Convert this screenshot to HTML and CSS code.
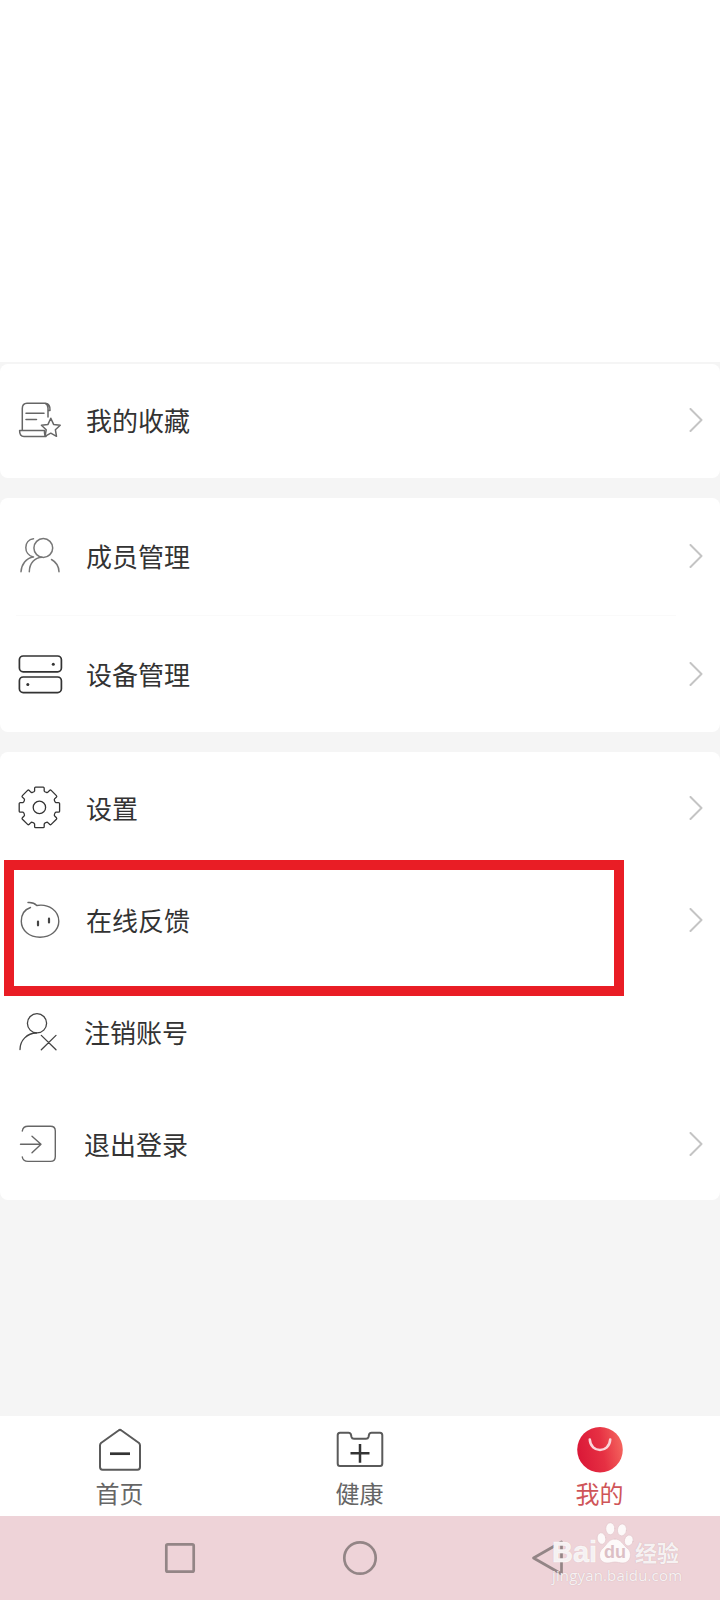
FILE: index.html
```html
<!DOCTYPE html>
<html lang="zh-CN">
<head>
<meta charset="utf-8">
<title>我的</title>
<link rel="stylesheet" href="styles.css">
</head>
<body>
<div class="screen">
  <header class="profile"></header>
  <main class="content">
    <section class="card card-favorites">
      <div class="row">
        <svg class="icon" viewBox="0 0 72 60" stroke="#666" stroke-width="1.500"><path d="M22.300 40V18.500Q22.300 13.200 27 13.200H45.500Q50.500 14 50 20.500H48M45 13.200Q48 15 48 18V27M44.500 40.500H19.600Q19.500 46.500 24 46.500H46M44.500 40.500V43Q44.500 45 46 46.500M26 23.300H44M26 29.500H36.500"/><path fill="#fff" d="M50.800 28.300L53.600 34.400L60.200 35.300L55.400 39.800L56.500 46.300L50.800 43.200L45 46.300L46.200 39.800L41.400 35.300L48 34.400Z"/></svg>
        <span class="label">我的收藏</span>
        <svg class="chevron" viewBox="0 0 14 24"><path d="M1.500 1L12.500 12L1.500 23"/></svg>
      </div>
    </section>
    <section class="card card-manage">
      <div class="row row-first">
        <svg class="icon" viewBox="0 0 72 60" stroke="#777" stroke-width="1.500"><circle cx="43.300" cy="22" r="9.400"/><path d="M33.500 12.800C23.500 14 23 28.500 33.500 31M21 45.700C21.500 38.500 26 32 33.500 31M29.300 45.700C29.500 37 35 31.500 42 31.300M51.500 33.500C56 36 58.800 40.500 59 45.700"/></svg>
        <span class="label">成员管理</span>
        <svg class="chevron" viewBox="0 0 14 24"><path d="M1.500 1L12.500 12L1.500 23"/></svg>
      </div>
      <div class="row row-divided">
        <svg class="icon" viewBox="0 0 72 60" stroke="#333" stroke-width="1.700"><rect x="19.400" y="12" width="42" height="15.800" rx="3.800"/><rect x="19.400" y="33" width="42" height="15.600" rx="3.800"/><g fill="#333" stroke="none"><circle cx="53.300" cy="20.200" r="1.500"/><circle cx="27.800" cy="40.600" r="1.500"/></g></svg>
        <span class="label">设备管理</span>
        <svg class="chevron" viewBox="0 0 14 24"><path d="M1.500 1L12.500 12L1.500 23"/></svg>
      </div>
    </section>
    <section class="card card-system">
      <div class="row">
        <svg class="icon" viewBox="0 0 72 60" stroke="#333" stroke-width="1.300"><g transform="translate(39.400 29.400)"><path d="M-3.800-20.200H3.800Q4.800-20.200 4.800-19V-16.500Q5.200-15.500 7-15Q8-14.600 8.800-15.500L10.400-17.100Q11.100-17.700 11.800-17L17-11.800Q17.700-11.100 17.100-10.400L15.500-8.800Q14.600-8 15-7Q15.500-5.200 16.500-4.800H19Q20.200-4.800 20.200-3.800V3.800Q20.200 4.800 19 4.800H16.500Q15.500 5.200 15 7Q14.600 8 15.500 8.800L17.100 10.400Q17.700 11.100 17 11.800L11.800 17Q11.100 17.700 10.400 17.100L8.800 15.500Q8 14.600 7 15Q5.200 15.500 4.800 16.500V19Q4.800 20.200 3.800 20.200H-3.800Q-4.800 20.200-4.800 19V16.500Q-5.200 15.500-7 15Q-8 14.600-8.800 15.500L-10.400 17.100Q-11.100 17.700-11.800 17L-17 11.800Q-17.700 11.100-17.100 10.400L-15.500 8.800Q-14.600 8-15 7Q-15.500 5.200-16.500 4.800H-19Q-20.200 4.800-20.200 3.800V-3.800Q-20.200-4.800-19-4.800H-16.500Q-15.500-5.200-15-7Q-14.600-8-15.500-8.800L-17.100-10.400Q-17.700-11.100-17-11.800L-11.800-17Q-11.100-17.700-10.400-17.100L-8.800-15.500Q-8-14.600-7-15Q-5.200-15.500-4.800-16.500V-19Q-4.800-20.200-3.800-20.200Z"/><circle r="6.200"/></g></svg>
        <span class="label">设置</span>
        <svg class="chevron" viewBox="0 0 14 24"><path d="M1.500 1L12.500 12L1.500 23"/></svg>
      </div>
      <div class="row">
        <svg class="icon" viewBox="0 0 72 60" stroke="#666" stroke-width="1.400"><path d="M28 12.500Q33.500 12 36.800 15.500C49 13.500 58.800 21 58.800 31.300C58.800 40.500 50.500 47.200 40 47.200C29.500 47.200 21.300 40.500 21.300 31.300C21.300 25 24.500 19.500 30.500 17.500"/><path stroke="#444" stroke-width="2.200" d="M38 31.500V35.300M49 28.700V32.500"/></svg>
        <span class="label">在线反馈</span>
        <svg class="chevron" viewBox="0 0 14 24"><path d="M1.500 1L12.500 12L1.500 23"/></svg>
      </div>
      <div class="row row-tight">
        <svg class="icon" viewBox="0 0 72 60" stroke="#444" stroke-width="1.300"><circle cx="37" cy="21.300" r="9.600"/><path d="M20 47.500C20 38.500 27 31 36.500 31M41.300 33.400L56 47.700M56 33.400L41.300 47.700"/></svg>
        <span class="label">注销账号</span>
      </div>
      <div class="row row-tight">
        <svg class="icon" viewBox="0 0 72 60" stroke="#666" stroke-width="1.400"><path d="M22.300 17Q23 12.300 28 12.300H50.500Q55.300 12.300 55.300 17V42.500Q55.300 47.400 50.500 47.400H28Q23 47.400 22.300 43M20.500 30.300H41M32 22.300L41 30.300L32 38.800"/></svg>
        <span class="label">退出登录</span>
        <svg class="chevron" viewBox="0 0 14 24"><path d="M1.500 1L12.500 12L1.500 23"/></svg>
      </div>
      <div class="highlight"></div>
    </section>
  </main>
  <nav class="tabs">
    <a class="tab">
      <svg class="tab-icon" viewBox="0 0 50 50" stroke="#5a5a5a" stroke-width="2"><path d="M23.500 4.500Q25 3.300 26.500 4.500L44 17Q45 18 45 19.500V41Q45 43.700 42.500 43.700H7.500Q5 43.700 5 41V19.500Q5 18 6 17Z"/><path stroke="#333" stroke-width="2.700" stroke-linecap="butt" style="stroke-linecap:butt" d="M15 27.700H35"/></svg>
      <span>首页</span>
    </a>
    <a class="tab">
      <svg class="tab-icon" viewBox="0 0 50 50" stroke="#5a5a5a" stroke-width="2"><path d="M5 6.800H13.500Q15.500 6.800 16 8.800L16.500 11Q17 12.800 19 12.800H31Q33 12.800 33.500 11L34 8.800Q34.500 6.800 36.500 6.800H45Q47.300 6.800 47.300 9.300V37.500Q47.300 40 45 40H5Q2.700 40 2.700 37.500V9.300Q2.700 6.800 5 6.800Z"/><path stroke="#333" stroke-width="2.500" style="stroke-linecap:butt" d="M15.500 27.300H34.500M25 18V36.700"/></svg>
      <span>健康</span>
    </a>
    <a class="tab tab-active">
      <svg class="tab-icon" viewBox="0 0 50 50"><defs><linearGradient id="badge" x1="0" y1=".6" x2="1" y2=".4"><stop offset="0" stop-color="#da1737"/><stop offset=".55" stop-color="#e63043"/><stop offset="1" stop-color="#f4655e"/></linearGradient></defs><circle cx="25" cy="23.700" r="22.800" fill="url(#badge)"/><path d="M14.800 13.500C15.500 27.500 34.500 27.500 35.200 13.500" stroke="#fbd5da" stroke-width="2.600"/></svg>
      <span>我的</span>
    </a>
  </nav>
  <footer class="system-nav">
    <svg class="system-keys" viewBox="0 0 720 84"><rect x="166.300" y="28.300" width="27.400" height="27.400" rx="1.500"/><circle cx="360" cy="42" r="15.700"/><path d="M533.500 42L561.500 26V58Z"/></svg>
    <div class="watermark">
      <div class="brand">
        <span class="brand-bai">Bai</span>
        <span class="paw"><svg viewBox="0 0 38 42"><g><ellipse cx="5.500" cy="16.500" rx="4.300" ry="5.800" transform="rotate(-10 5.500 16.500)"/><ellipse cx="14.300" cy="6.700" rx="4.500" ry="6"/><ellipse cx="26" cy="7.900" rx="4.500" ry="6" transform="rotate(8 26 7.900)"/><ellipse cx="32.800" cy="18.500" rx="4.300" ry="5.500" transform="rotate(15 32.800 18.500)"/><path d="M19 17C25 17 27 23 31 26C37 30 35 41 27 41C23 41 22 40 19 40C16 40 15 41 11 41C3 41 1 31 7 26C11 23 12 17 19 17Z"/></g></svg><b>du</b></span>
        <span class="brand-cn">经验</span>
      </div>
      <div class="site">jingyan.baidu.com</div>
    </div>
  </footer>
</div>
</body>
</html>
```
FILE: styles.css
```css
* { box-sizing: border-box; }
body {
  margin: 0;
  font-family: "Noto Sans CJK SC", sans-serif;
  color: #333;
  background: #f5f5f5;
}
svg { display: block; fill: none; stroke-linecap: round; stroke-linejoin: round; }
.screen { width: 720px; height: 1600px; display: flex; flex-direction: column; overflow: hidden; }
.profile { height: 362px; background: #fff; }
.content {
  flex: 1;
  padding-top: 2px;
  display: flex;
  flex-direction: column;
  gap: 20px;
  background: #f5f5f5;
}
.card { position: relative; background: #fff; border-radius: 8px; }
.card-favorites { height: 114px; }
.card-manage .row { height: 117px; }
.row { display: flex; align-items: center; height: 112px; padding-right: 17px; }
.row-first { padding-bottom: 1px; }
.row-divided { background: linear-gradient(#fafafa, #fafafa) 16px 0 / 660px 1px no-repeat; }
.icon { width: 72px; height: 60px; margin-right: 14px; }
.row-tight .icon { margin-right: 12px; }
.label { flex: 1; font-size: 26px; line-height: 38px; }
.chevron { width: 14px; height: 24px; stroke: #c4c4c4; stroke-width: 2; }
.highlight {
  position: absolute;
  left: 4px;
  top: 108px;
  width: 620px;
  height: 136px;
  border: 10px solid #e91d25;
}
.tabs { height: 100px; display: flex; background: #fff; }
.tab {
  width: 240px;
  padding-top: 10px;
  display: flex;
  flex-direction: column;
  align-items: center;
  font-size: 24px;
  line-height: 33px;
  color: #666;
}
.tab span { margin-right: 1px; }
.tab-icon { width: 50px; height: 50px; }
.tab-active { color: #cf5558; }
.system-nav { position: relative; height: 84px; background: #eed3d8; }
.system-keys { width: 720px; height: 84px; stroke: #938586; stroke-width: 2.7; }
.watermark {
  position: absolute;
  left: 552px;
  top: 6px;
  color: rgba(255, 255, 255, .85);
  font-family: "Noto Sans", "Noto Sans CJK SC", sans-serif;
  text-shadow: 0 0 1px #c5a9ae;
}
.brand { display: flex; height: 43px; align-items: flex-start; }
.brand-bai {
  width: 44px;
  font-family: "Liberation Sans", sans-serif;
  font-size: 29px;
  font-weight: 700;
  line-height: 60px;
  -webkit-text-stroke: .6px rgba(255, 255, 255, .85);
}
.paw { position: relative; width: 38px; margin-right: 1px; }
.paw svg { width: 38px; height: 42px; fill: rgba(255, 255, 255, .85); stroke: #e0c4c9; stroke-width: .6; }
.paw b {
  position: absolute;
  left: 8px;
  top: 20px;
  font-family: "Liberation Sans", sans-serif;
  font-size: 18px;
  line-height: 20px;
  color: #dcbfc5;
  text-shadow: none;
}
.brand-cn { font-size: 22px; line-height: 60px; font-weight: 700; }
.site { font-family: "Open Sans", sans-serif; font-size: 15px; line-height: 20px; letter-spacing: .15px; }
```
